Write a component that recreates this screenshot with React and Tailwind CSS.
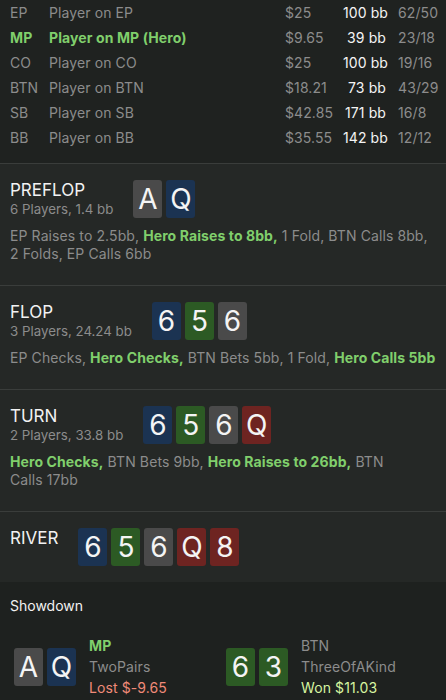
const PLAYERS = [
  { pos: 'EP', name: 'Player on EP', money: '$25', bb: '100 bb', ratio: '62/50' },
  { pos: 'MP', name: 'Player on MP (Hero)', money: '$9.65', bb: '39 bb', ratio: '23/18', hero: true },
  { pos: 'CO', name: 'Player on CO', money: '$25', bb: '100 bb', ratio: '19/16' },
  { pos: 'BTN', name: 'Player on BTN', money: '$18.21', bb: '73 bb', ratio: '43/29' },
  { pos: 'SB', name: 'Player on SB', money: '$42.85', bb: '171 bb', ratio: '16/8' },
  { pos: 'BB', name: 'Player on BB', money: '$35.55', bb: '142 bb', ratio: '12/12' },
]

const SUIT_BG = {
  s: 'bg-[#4a4a4a]',
  c: 'bg-[#2c5a24]',
  d: 'bg-[#1b3352]',
  h: 'bg-[#6e2421]',
}

// board cards: rank + suit key; actions: [text, isHero]; null = line break
const STREETS = [
  {
    title: 'PREFLOP',
    sub: '6 Players, 1.4 bb',
    cards: [['A', 's'], ['Q', 'd']],
    actions: [
      ['EP Raises to 2.5bb, '],
      ['Hero Raises to 8bb,', true],
      [' 1 Fold, BTN Calls 8bb,'],
      null,
      ['2 Folds, EP Calls 6bb'],
    ],
  },
  {
    title: 'FLOP',
    sub: '3 Players, 24.24 bb',
    cards: [['6', 'd'], ['5', 'c'], ['6', 's']],
    actions: [
      ['EP Checks, '],
      ['Hero Checks,', true],
      [' BTN Bets 5bb, 1 Fold, '],
      ['Hero Calls 5bb', true],
    ],
  },
  {
    title: 'TURN',
    sub: '2 Players, 33.8 bb',
    cards: [['6', 'd'], ['5', 'c'], ['6', 's'], ['Q', 'h']],
    actions: [
      ['Hero Checks,', true],
      [' BTN Bets 9bb, '],
      ['Hero Raises to 26bb,', true],
      [' BTN'],
      null,
      ['Calls 17bb'],
    ],
  },
  {
    title: 'RIVER',
    cards: [['6', 'd'], ['5', 'c'], ['6', 's'], ['Q', 'h'], ['8', 'h']],
  },
]

function Card({ rank, suit }) {
  return (
    <div
      className={`w-[29px] h-[38px] rounded-[3px] flex items-center justify-center text-[28px] leading-none text-[#f4f4f4] ${SUIT_BG[suit]}`}
    >
      {rank}
    </div>
  )
}

function Street({ street }) {
  return (
    <section className={`border-t border-[#3a3d3b] bg-[#252826] pl-[10px] pr-[4px] pt-4 ${street.actions ? 'pb-[22px]' : 'pb-4'}`}>
      <div className="flex items-start gap-5">
        <div>
          <div className="text-[17px] leading-[20px] text-[#f2f2f2]">{street.title}</div>
          {street.sub && <div className="text-[13.3px] leading-[18px] text-[#8c8c8c]">{street.sub}</div>}
        </div>
        <div className="flex gap-[4px]">
          {street.cards.map(([r, s], i) => (
            <Card key={i} rank={r} suit={s} />
          ))}
        </div>
      </div>
      {street.actions && (
        <p className="mt-[9px] text-[14px] leading-[18px] tracking-[0.1px] text-[#8c8c8c] whitespace-nowrap">
          {street.actions.map((a, i) => {
            if (!a) return <br key={i} />
            const [t, hero] = a
            return hero ? (
              <span key={i} className="font-bold text-[#80cf6c]">{t}</span>
            ) : (
              <span key={i}>{t}</span>
            )
          })}
        </p>
      )}
    </section>
  )
}

function ShowdownHand({ cards, pos, hand, result, hero, won }) {
  return (
    <div className="flex items-center gap-[13px]">
      <div className="flex gap-[4px]">
        {cards.map(([r, s], i) => (
          <Card key={i} rank={r} suit={s} />
        ))}
      </div>
      <div className="text-[14px] leading-[21px] tracking-[0.1px]">
        <div className={hero ? 'font-bold text-[#80cf6c]' : 'text-[#8c8c8c]'}>{pos}</div>
        <div className="text-[#8c8c8c]">{hand}</div>
        <div className={won ? 'text-[#d6f5a0]' : 'text-[#f08a78]'}>{result}</div>
      </div>
    </div>
  )
}

export default function App() {
  return (
    <div className="min-h-screen bg-[#1f2220] font-['Inter','Liberation_Sans',sans-serif] antialiased">
      {/* ── Players ── */}
      <div className="pb-[13px] text-[14px] tracking-[0.1px]">
        {PLAYERS.map((p) => (
          <div key={p.pos} className="flex items-center h-[25px] px-[10px] whitespace-nowrap">
            <div className={`w-[39px] ${p.hero ? 'font-bold text-[#80cf6c]' : 'text-[#8c8c8c]'}`}>{p.pos}</div>
            <div className={`flex-1 ${p.hero ? 'font-bold text-[#80cf6c]' : 'text-[#8c8c8c]'}`}>{p.name}</div>
            <div className="w-[58px] text-[#8c8c8c]">{p.money}</div>
            <div className="w-[43px] text-right text-[#f4f4f4]">{p.bb}</div>
            <div className="w-[38px] ml-3 text-[#8c8c8c]">{p.ratio}</div>
          </div>
        ))}
      </div>

      {/* ── Streets ── */}
      {STREETS.map((s) => (
        <Street key={s.title} street={s} />
      ))}

      {/* ── Showdown ── */}
      <section className="bg-[#1e211f] px-[10px] pt-[14px] pb-4">
        <div className="text-[14px] leading-[20px] text-[#f2f2f2]">Showdown</div>
        <div className="mt-[19px] grid grid-cols-[212px_1fr] pl-[4px]">
          <ShowdownHand cards={[['A', 's'], ['Q', 'd']]} pos="MP" hand="TwoPairs" result="Lost $-9.65" hero />
          <ShowdownHand cards={[['6', 'c'], ['3', 'c']]} pos="BTN" hand="ThreeOfAKind" result="Won $11.03" won />
        </div>
      </section>
    </div>
  )
}
